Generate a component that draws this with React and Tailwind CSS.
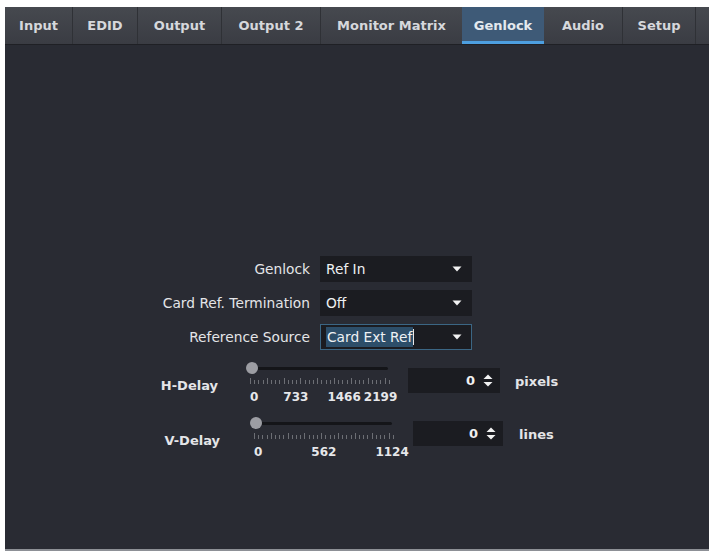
import React from "react";

const tabs = [
  { name: "Input", w: "w-[68px]" },
  { name: "EDID", w: "w-[65px]" },
  { name: "Output", w: "w-[84px]" },
  { name: "Output 2", w: "w-[99px]" },
  { name: "Monitor Matrix", w: "w-[141px]" },
  { name: "Genlock", w: "w-[82px]", active: true },
  { name: "Audio", w: "w-[79px]" },
  { name: "Setup", w: "w-[72px]" },
];

function Caret() {
  return (
    <svg width="10" height="6" viewBox="0 0 10 6">
      <path d="M0.5 0.5 L9.5 0.5 L5 5.5 Z" fill="#f2f2f2" />
    </svg>
  );
}

function Spinner() {
  return (
    <svg width="10" height="13" viewBox="0 0 10 13">
      <path d="M5 0.5 L9.5 5 L0.5 5 Z" fill="#f2f2f2" />
      <path d="M0.5 8 L9.5 8 L5 12.5 Z" fill="#f2f2f2" />
    </svg>
  );
}

function Select({ value, focused }) {
  return (
    <div
      className={
        "w-[152px] h-[26px] flex items-center justify-between pl-[5px] pr-[9px] bg-[#1b1c21] " +
        (focused ? "border border-[#3b6684]" : "border border-[#1b1c21]")
      }
    >
      {focused ? (
        <span className="flex items-center">
          <span className="bg-[#2d4e69] text-[#eef1f4] px-[1px]">{value}</span>
          <span className="w-px h-[16px] bg-[#e8e8e8]" />
        </span>
      ) : (
        <span className="text-[#eef0f2]">{value}</span>
      )}
      <Caret />
    </div>
  );
}

function Ticks({ count }) {
  const items = [];
  for (let i = 0; i < count; i++) {
    items.push(
      <span
        key={i}
        className={
          "w-px bg-[#6c6e74] " + (i % 4 === 0 ? "h-[6px]" : "h-[4px]")
        }
      />
    );
  }
  return (
    <div className="flex items-end justify-between w-[140px] h-[6px] ml-[4px]">
      {items}
    </div>
  );
}

function Slider({ labels }) {
  return (
    <div className="flex flex-col w-[162px]">
      <div className="flex items-center h-[12px]">
        <span className="w-[12px] h-[12px] rounded-full bg-[#9c9da3] shrink-0" />
        <span className="w-[130px] h-[3px] bg-[#141519] rounded-r" />
      </div>
      <div className="mt-[4px]">
        <Ticks count={34} />
      </div>
      <div className="flex mt-[5px] h-[16px] text-[12px] leading-[16px] text-[#e6e7ea] font-bold whitespace-nowrap">
        {labels}
      </div>
    </div>
  );
}

function NumberBox({ w }) {
  return (
    <div
      className={
        "h-[25px] flex items-center justify-end pr-[7px] bg-[#1b1c21] gap-[8px] " + w
      }
    >
      <span className="text-[#f0f0f0] text-[13px] font-bold">0</span>
      <Spinner />
    </div>
  );
}

export default function App() {
  return (
    <div
      className="w-[714px] h-[554px] bg-white pt-[7px] pl-[5px]"
      style={{ fontFamily: '"DejaVu Sans", "Liberation Sans", sans-serif' }}
    >
      <div className="w-[704px] h-[544px] flex flex-col bg-[#292b33] border-b-2 border-[#8d9096] overflow-hidden">
        <div className="h-[38px] flex bg-gradient-to-b from-[#46494f] to-[#3a3c43] border-b border-[#1f2025]">
          {tabs.map((t, i) => (
            <div
              key={t.name}
              className={
                "h-full flex items-center justify-center text-[13px] font-bold relative " +
                t.w +
                (t.active
                  ? " bg-[#3e5a77] text-[#e4e9ee] border-b-[3px] border-[#4d9fe0] pt-[3px]"
                  : " text-[#d6d8dc]") +
                (i < tabs.length - 1 && !t.active && !tabs[i + 1].active
                  ? " border-r border-[#2f3136]"
                  : "")
              }
            >
              {t.name}
            </div>
          ))}
          <div className="w-px h-full bg-[#2f3136]" />
        </div>

        <div className="flex-1 flex flex-col pt-[211px] text-[13.75px] text-[#e4e5e8]">
          <div className="flex flex-col gap-[8px]">
            <div className="flex items-center gap-[10px]">
              <span className="w-[305px] text-right">Genlock</span>
              <Select value="Ref In" />
            </div>
            <div className="flex items-center gap-[10px]">
              <span className="w-[305px] text-right">Card Ref. Termination</span>
              <Select value="Off" />
            </div>
            <div className="flex items-center gap-[10px]">
              <span className="w-[305px] text-right">Reference Source</span>
              <Select value="Card Ext Ref" focused />
            </div>
          </div>

          <div className="flex items-start mt-[12px] text-[13px]">
            <span className="w-[213px] text-right font-bold mt-[14px]">H-Delay</span>
            <div className="ml-[28px]">
              <Slider
                labels={
                  <>
                    <span className="ml-[4px]">0</span>
                    <span className="ml-[25px]">733</span>
                    <span className="ml-[19px]">1466</span>
                    <span className="ml-[3px]">2199</span>
                  </>
                }
              />
            </div>
            <div className="mt-[6px]">
              <NumberBox w="w-[92px]" />
            </div>
            <span className="ml-[15px] mt-[10px] font-bold">pixels</span>
          </div>

          <div className="flex items-start mt-[12px] text-[13px]">
            <span className="w-[215px] text-right font-bold mt-[14px]">V-Delay</span>
            <div className="ml-[30px]">
              <Slider
                labels={
                  <>
                    <span className="ml-[4px]">0</span>
                    <span className="ml-[49px]">562</span>
                    <span className="ml-[39px]">1124</span>
                  </>
                }
              />
            </div>
            <div className="mt-[4px] ml-[1px]">
              <NumberBox w="w-[90px]" />
            </div>
            <span className="ml-[16px] mt-[8px] font-bold">lines</span>
          </div>
        </div>
      </div>
    </div>
  );
}
